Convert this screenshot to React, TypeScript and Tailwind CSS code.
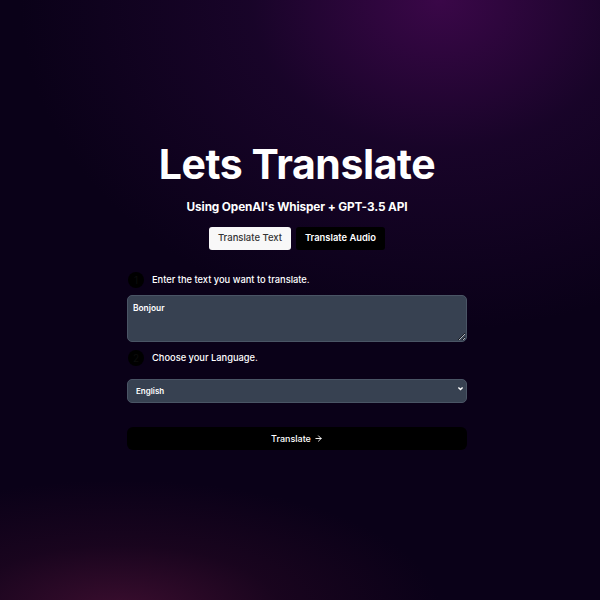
import { ArrowRight } from 'lucide-react';

export default function App() {
  return (
    <div
      className="relative w-full min-h-[600px] h-[600px] overflow-hidden bg-[#0a0118] text-white"
      style={{ fontFamily: 'Inter, "Noto Sans", sans-serif' }}
    >
      {/* background glows */}
      <div className="pointer-events-none absolute inset-0 bg-[radial-gradient(ellipse_420px_330px_at_440px_0px,#3a0748_0%,rgba(34,6,52,0.6)_45%,transparent_100%)]" />
      <div className="pointer-events-none absolute inset-0 bg-[radial-gradient(ellipse_320px_130px_at_120px_610px,#3a0d2e_0%,rgba(40,8,36,0.5)_50%,transparent_100%)]" />

      <div className="relative flex flex-col items-center pt-[138px] pr-[6px]">
        {/* Header */}
        <h1 className="text-[41px] leading-[52px] font-bold tracking-[-0.01em]">Lets Translate</h1>
        <p className="mt-[9px] text-[11.8px] leading-4 font-bold tracking-[-0.01em]">Using OpenAI's Whisper + GPT-3.5 API</p>

        {/* Tabs */}
        <div className="mt-[12px] flex gap-[5px]">
          <button className="h-[23px] w-[82px] rounded-[3px] bg-[#f8f8f8] text-[9.5px] font-medium text-[#333]">
            Translate Text
          </button>
          <button className="h-[23px] w-[89px] rounded-[3px] bg-black text-[9.4px] font-semibold text-white">
            Translate Audio
          </button>
        </div>

        {/* Form */}
        <div className="mt-[22px] flex w-[340px] flex-col">
          <div className="flex items-center gap-[8px] pl-[1px]">
            <span className="flex h-[16px] w-[16px] items-center justify-center rounded-full bg-black text-[10px] text-[#0c0c0c]">1</span>
            <span className="text-[9.3px] leading-[16px] font-medium">Enter the text you want to translate.</span>
          </div>
          <textarea
            defaultValue="Bonjour"
            className="mt-[7px] h-[47px] w-full resize-y rounded-[5px] border border-gray-600 bg-[#374151] px-[5px] py-[6px] text-[8.4px] leading-[12px] font-semibold text-white outline-none"
          />

          <div className="mt-[8px] flex items-center gap-[8px] pl-[1px]">
            <span className="flex h-[16px] w-[16px] items-center justify-center rounded-full bg-black text-[10px] text-[#0c0c0c]">2</span>
            <span className="text-[9.3px] leading-[16px] font-medium">Choose your Language.</span>
          </div>
          <div className="relative mt-[10px]">
            <select
              defaultValue="English"
              className="h-[24px] w-full appearance-none rounded-[5px] border border-gray-600 bg-[#374151] px-[8px] text-[8px] font-semibold text-white outline-none"
            >
              <option>English</option>
              <option>French</option>
              <option>Spanish</option>
            </select>
            <svg
              className="pointer-events-none absolute right-[3px] top-[9px] h-[7px] w-[7px]"
              viewBox="0 0 10 10"
              fill="none"
              stroke="white"
              strokeWidth="2"
            >
              <path d="M2 3.5l3 3 3-3" />
            </svg>
          </div>

          <button className="mt-[24px] flex h-[23px] w-full items-center justify-center gap-[3px] rounded-[6px] bg-black text-[9px] font-medium text-white">
            Translate
            <ArrowRight className="h-[9px] w-[9px]" strokeWidth={2.5} />
          </button>
        </div>
      </div>
    </div>
  );
}
